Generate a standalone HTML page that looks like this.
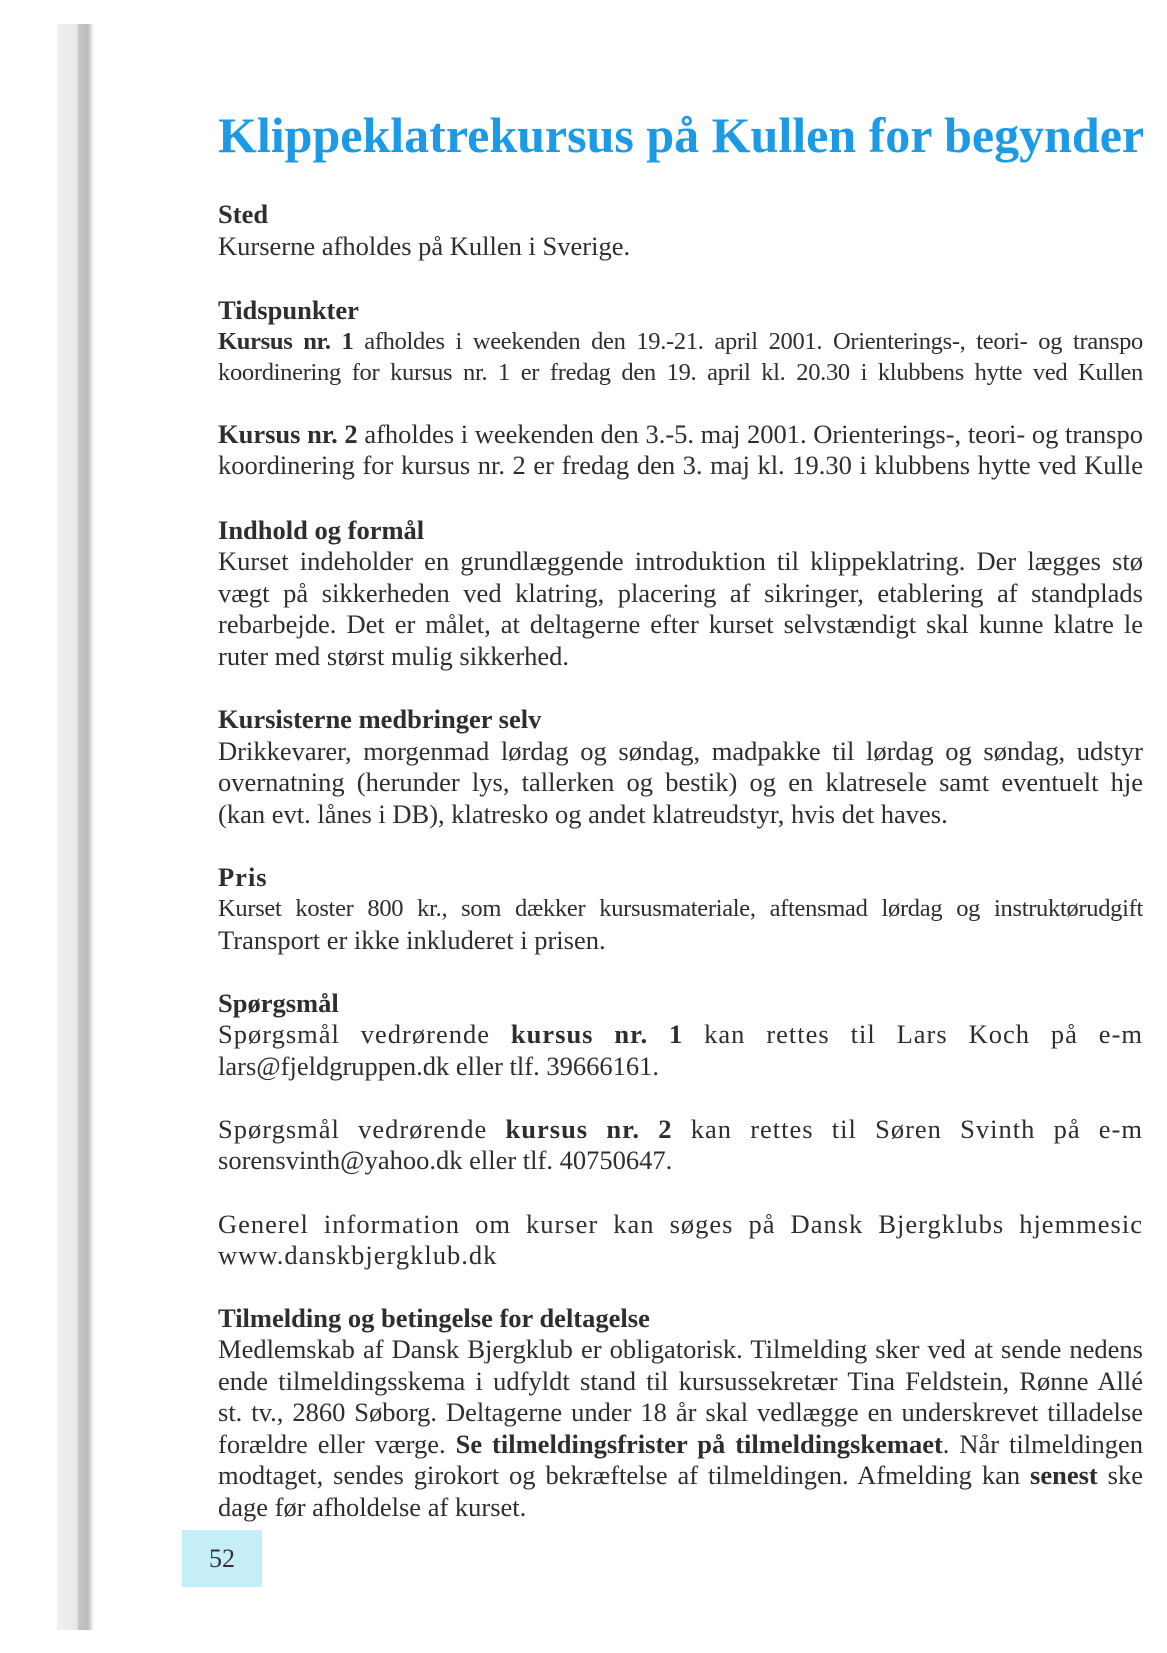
<!DOCTYPE html>
<html><head><meta charset="utf-8"><style>
html,body{margin:0;padding:0;background:#fff;}
body{width:1167px;height:1653px;position:relative;overflow:hidden;font-family:"Liberation Serif",serif;color:#2e2e2e;}
.strip{position:absolute;left:57px;top:24px;width:36px;height:1606px;background:linear-gradient(to right,#f0f0f0 0,#e8e8e8 55%,#c4c6c8 60%,#b8babc 85%,#f4f4f4 100%);}
.l{position:absolute;left:218px;width:925px;overflow:hidden;white-space:nowrap;font-size:26.5px;line-height:32px;}
.j{text-align:justify;text-align-last:justify;white-space:normal;height:32px;}
.c{font-size:24.5px;letter-spacing:-0.3px;}
.h{font-weight:bold;}
.t{position:absolute;left:218px;top:105px;width:925px;overflow:hidden;white-space:nowrap;font-size:50px;line-height:60px;font-weight:bold;color:#1c9ae6;}
.pg{position:absolute;left:182px;top:1530px;width:80px;height:57px;background:#c6eef9;font-size:26px;line-height:57px;text-align:center;color:#333;}
.sp{letter-spacing:1px;}
</style></head><body>
<div class="strip"></div>
<div class="t">Klippeklatrekursus på Kullen for begynder</div>
<div class="l h" style="top:198px">Sted</div>
<div class="l" style="top:230px">Kurserne afholdes på Kullen i Sverige.</div>
<div class="l h" style="top:294px">Tidspunkter</div>
<div class="l j c" style="top:326px"><b>Kursus nr. 1</b> afholdes i weekenden den 19.-21. april 2001. Orienterings-, teori- og transpo</div>
<div class="l j c" style="top:357px">koordinering for kursus nr. 1 er fredag den 19. april kl. 20.30 i klubbens hytte ved Kullen</div>
<div class="l j" style="top:418px"><b>Kursus nr. 2</b> afholdes i weekenden den 3.-5. maj 2001. Orienterings-, teori- og transpo</div>
<div class="l j" style="top:449px">koordinering for kursus nr. 2 er fredag den 3. maj kl. 19.30 i klubbens hytte ved Kulle</div>
<div class="l h" style="top:514px">Indhold og formål</div>
<div class="l j" style="top:545px">Kurset indeholder en grundlæggende introduktion til klippeklatring. Der lægges stø</div>
<div class="l j" style="top:577px">vægt på sikkerheden ved klatring, placering af sikringer, etablering af standplads</div>
<div class="l j" style="top:608px">rebarbejde. Det er målet, at deltagerne efter kurset selvstændigt skal kunne klatre le</div>
<div class="l" style="top:640px">ruter med størst mulig sikkerhed.</div>
<div class="l h" style="top:703px">Kursisterne medbringer selv</div>
<div class="l j" style="top:735px">Drikkevarer, morgenmad lørdag og søndag, madpakke til lørdag og søndag, udstyr</div>
<div class="l j" style="top:766px">overnatning (herunder lys, tallerken og bestik) og en klatresele samt eventuelt hje</div>
<div class="l" style="top:798px">(kan evt. lånes i DB), klatresko og andet klatreudstyr, hvis det haves.</div>
<div class="l h sp" style="top:861px">Pris</div>
<div class="l j c" style="top:893px">Kurset koster 800 kr., som dækker kursusmateriale, aftensmad lørdag og instruktørudgift</div>
<div class="l" style="top:924px">Transport er ikke inkluderet i prisen.</div>
<div class="l h" style="top:987px">Spørgsmål</div>
<div class="l j sp" style="top:1018px">Spørgsmål vedrørende <b>kursus nr. 1</b> kan rettes til Lars Koch på e-m</div>
<div class="l" style="top:1050px">lars@fjeldgruppen.dk eller tlf. 39666161.</div>
<div class="l j sp" style="top:1113px">Spørgsmål vedrørende <b>kursus nr. 2</b> kan rettes til Søren Svinth på e-m</div>
<div class="l" style="top:1144px">sorensvinth@yahoo.dk eller tlf. 40750647.</div>
<div class="l j sp" style="top:1208px">Generel information om kurser kan søges på Dansk Bjergklubs hjemmesic</div>
<div class="l sp" style="top:1239px">www.danskbjergklub.dk</div>
<div class="l h" style="top:1302px">Tilmelding og betingelse for deltagelse</div>
<div class="l j" style="top:1333px">Medlemskab af Dansk Bjergklub er obligatorisk. Tilmelding sker ved at sende nedens</div>
<div class="l j" style="top:1365px">ende tilmeldingsskema i udfyldt stand til kursussekretær Tina Feldstein, Rønne Allé</div>
<div class="l j" style="top:1396px">st. tv., 2860 Søborg. Deltagerne under 18 år skal vedlægge en underskrevet tilladelse</div>
<div class="l j" style="top:1428px">forældre eller værge. <b>Se tilmeldingsfrister på tilmeldingskemaet</b>. Når tilmeldingen</div>
<div class="l j" style="top:1459px">modtaget, sendes girokort og bekræftelse af tilmeldingen. Afmelding kan <b>senest</b> ske</div>
<div class="l" style="top:1491px">dage før afholdelse af kurset.</div>
<div class="pg">52</div>
</body></html>
